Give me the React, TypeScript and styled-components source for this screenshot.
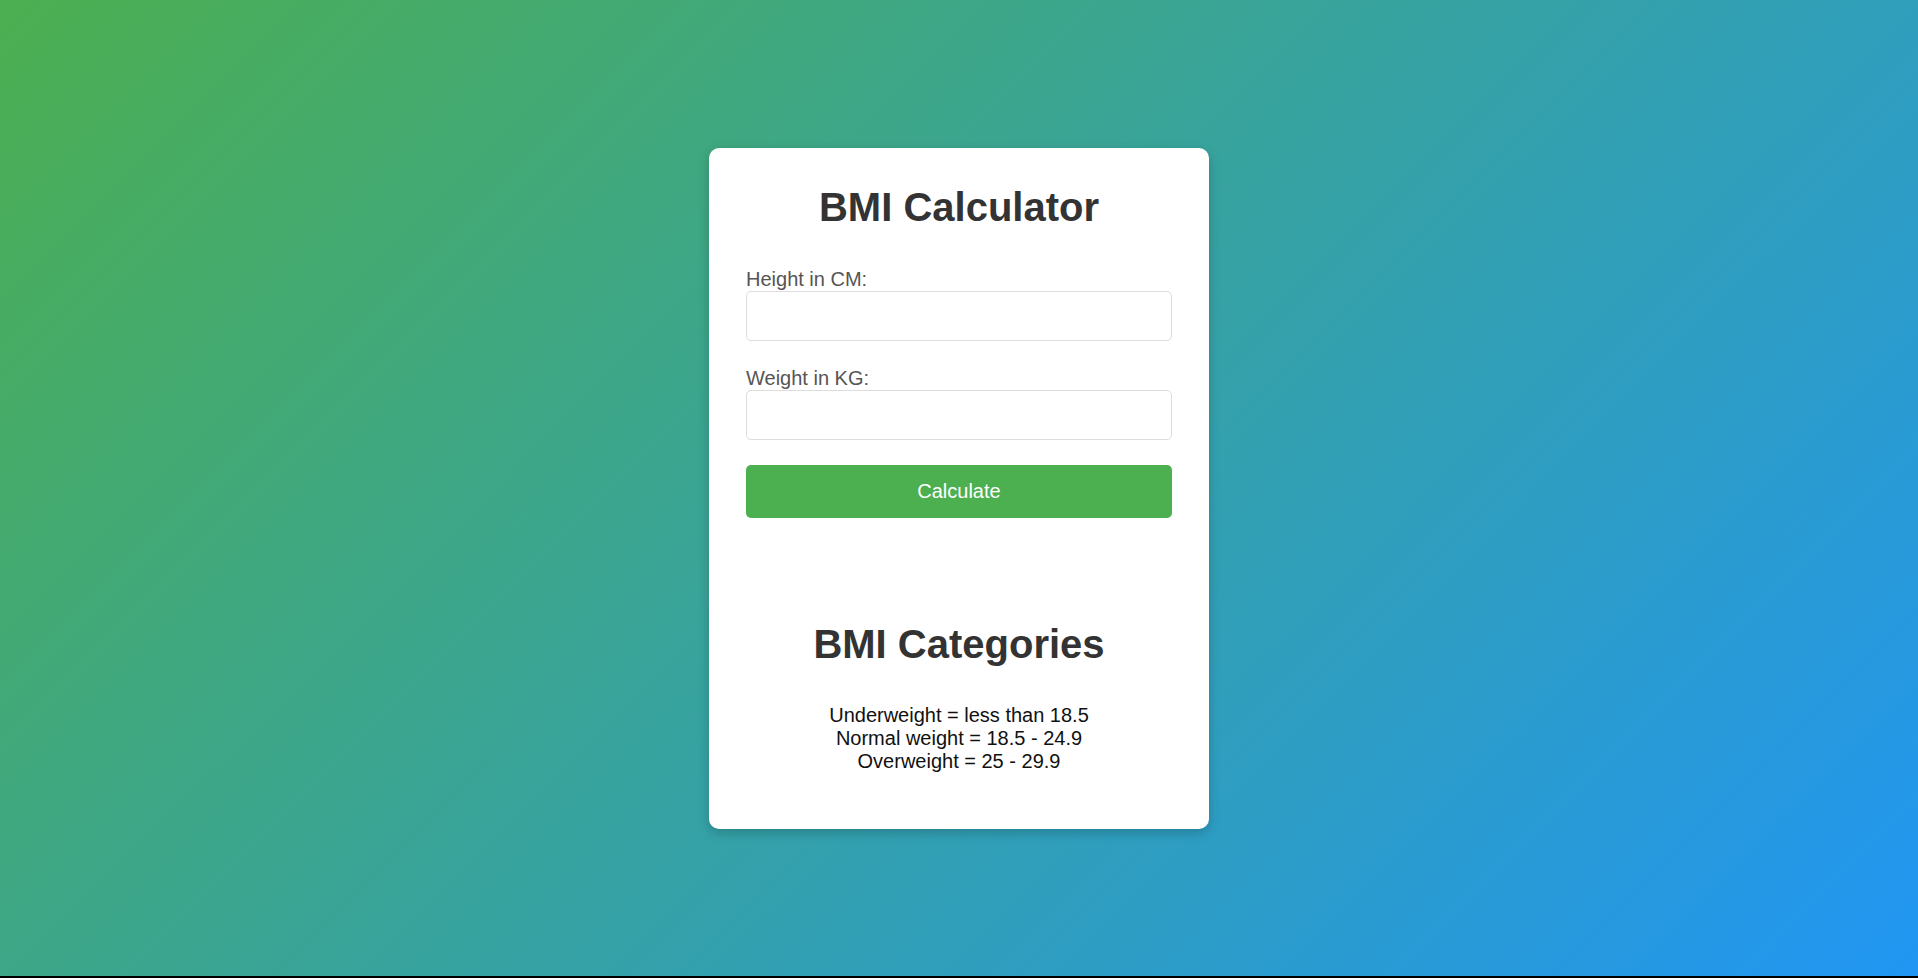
import React from "react";
import styled, { createGlobalStyle } from "styled-components";

const Global = createGlobalStyle`
  html, body { margin: 0; padding: 0; background: #000; }
  body { font-family: "Liberation Sans", Arial, sans-serif; }
  * { box-sizing: border-box; }
`;

const Page = styled.div`
  height: calc(100vh - 2px);
  background: linear-gradient(135deg, #4caf50, #2196f3);
  display: flex;
  align-items: center;
  justify-content: center;
`;

const Card = styled.div`
  width: 500px;
  background: #fff;
  border-radius: 10px;
  box-shadow: 0 4px 12px rgba(0, 0, 0, 0.2);
  padding: 36px 37px 56px;
  display: flex;
  flex-direction: column;
`;

const Title = styled.h1<{ $gap: number }>`
  margin: 0 0 ${(p) => p.$gap}px;
  font-size: 40px;
  line-height: 46px;
  font-weight: 700;
  color: #333;
  text-align: center;
`;

const Field = styled.div`
  display: flex;
  flex-direction: column;
  margin-bottom: 25px;
`;

const Label = styled.label`
  font-size: 20px;
  line-height: 24px;
  color: #555;
`;

const Input = styled.input`
  height: 50px;
  width: 100%;
  border: 1px solid #ddd;
  border-radius: 5px;
  font-size: 20px;
  padding: 0 10px;
  font-family: inherit;
  outline: none;
`;

const Button = styled.button`
  height: 53px;
  width: 100%;
  border: none;
  border-radius: 5px;
  background: #4caf50;
  color: #fff;
  font-size: 20px;
  font-family: inherit;
  cursor: pointer;
`;

const Result = styled.div`
  height: 103px;
`;

const Lines = styled.div`
  display: flex;
  flex-direction: column;
  align-items: center;
  font-size: 20px;
  line-height: 23px;
  color: #111;
`;

export default function App() {
  return (
    <>
      <Global />
      <Page>
        <Card>
          <Title $gap={37}>BMI Calculator</Title>
          <Field>
            <Label htmlFor="h">Height in CM:</Label>
            <Input id="h" type="text" />
          </Field>
          <Field>
            <Label htmlFor="w">Weight in KG:</Label>
            <Input id="w" type="text" />
          </Field>
          <Button>Calculate</Button>
          <Result />
          <Title $gap={37}>BMI Categories</Title>
          <Lines>
            <span>Underweight = less than 18.5</span>
            <span>Normal weight = 18.5 - 24.9</span>
            <span>Overweight = 25 - 29.9</span>
          </Lines>
        </Card>
      </Page>
    </>
  );
}
